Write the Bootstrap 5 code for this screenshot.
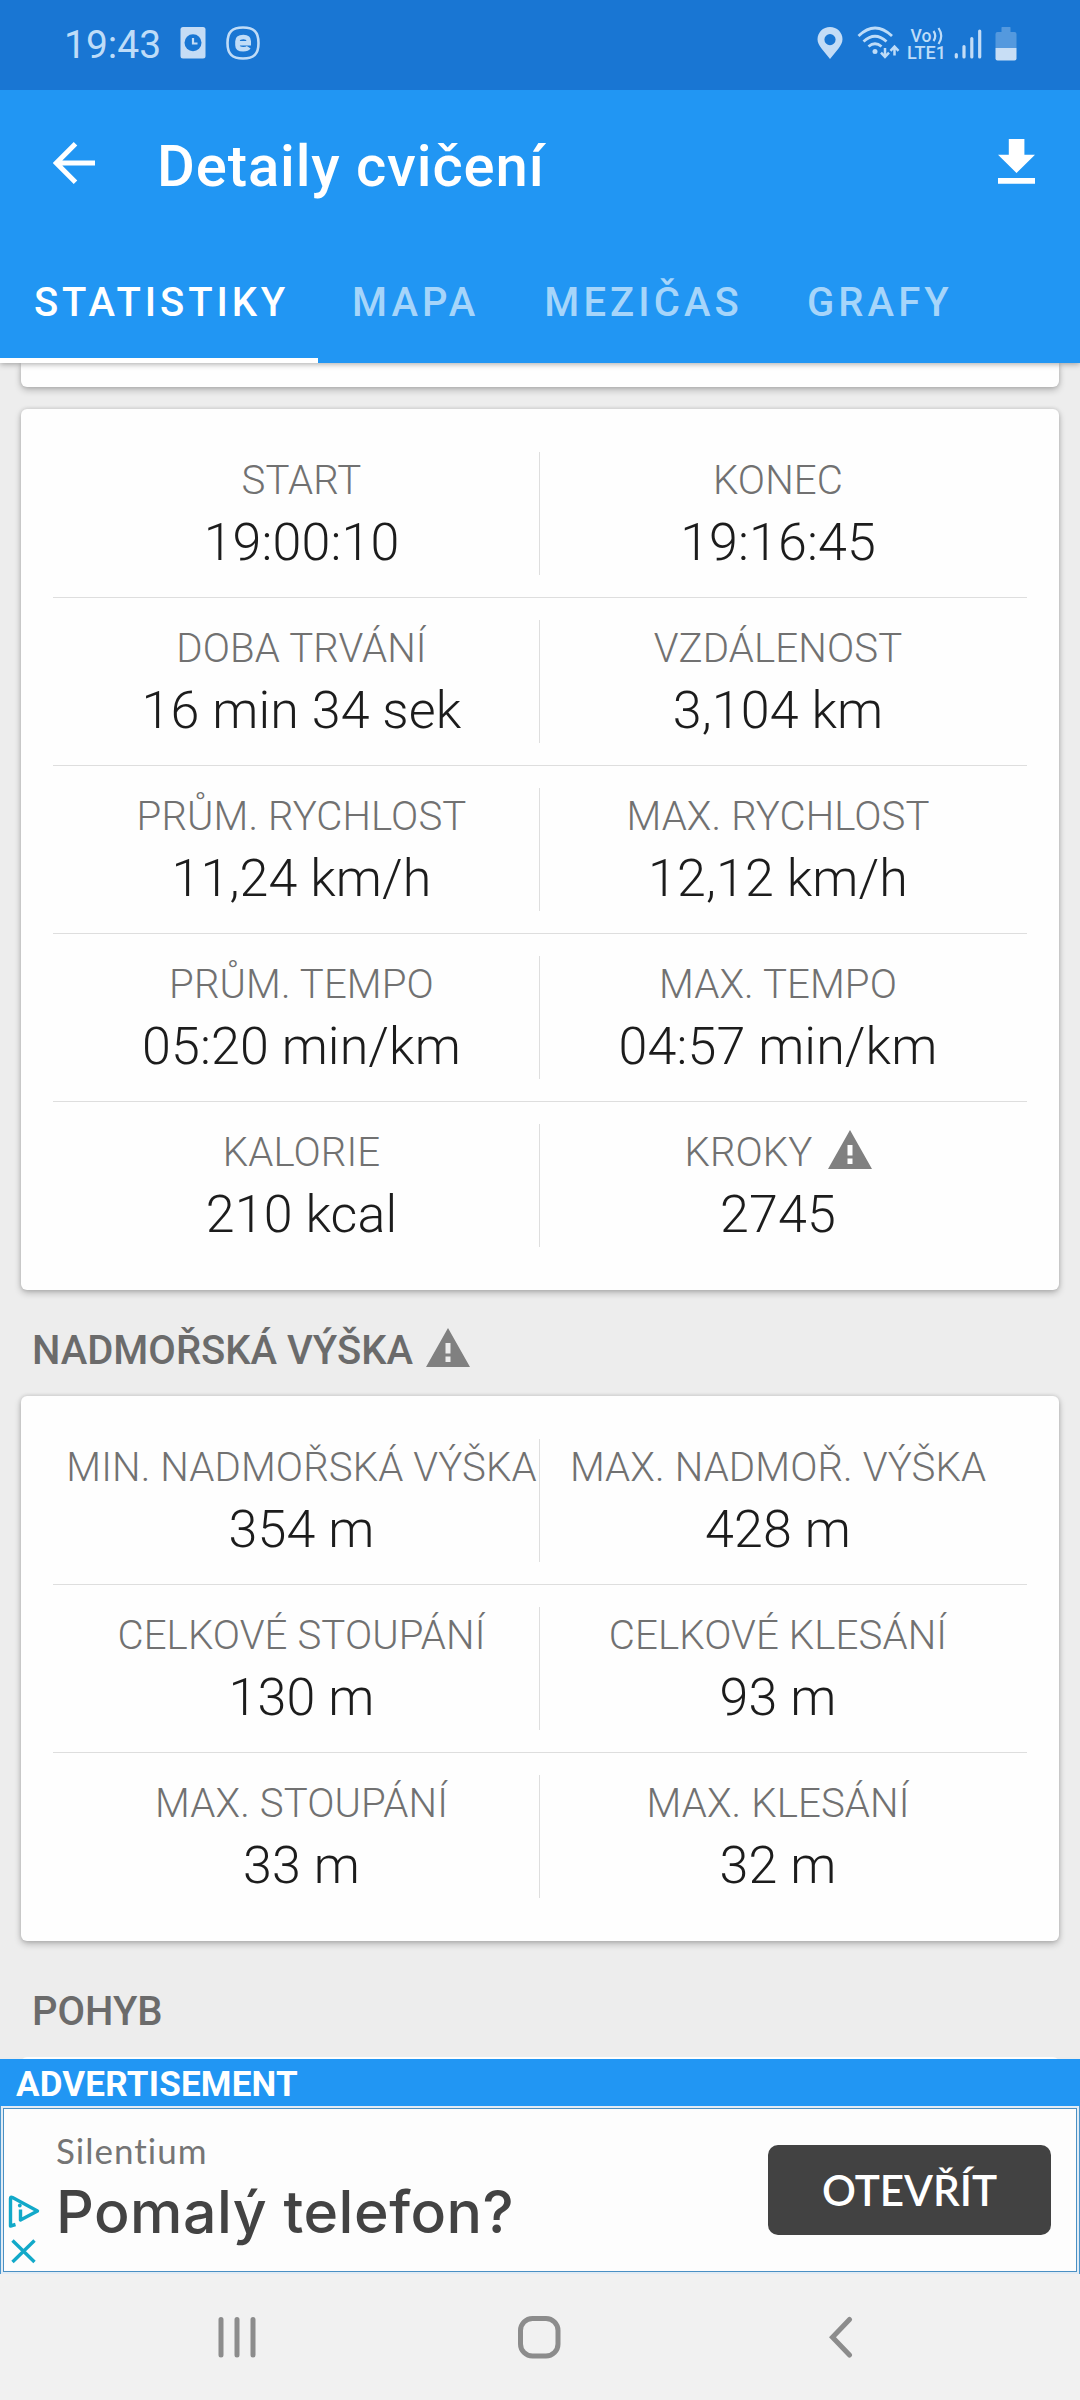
<!DOCTYPE html>
<html lang="cs">
<head>
<meta charset="utf-8">
<title>Detaily cvičení</title>
<meta name="viewport" content="width=device-width, initial-scale=1">
<link href="https://cdn.jsdelivr.net/npm/bootstrap@5.3.0/dist/css/bootstrap.min.css" rel="stylesheet">
<style>
body{font-family:Roboto,"Noto Sans",sans-serif;background:#ededed;height:2400px;overflow:hidden}
svg{display:block;flex:none}
.status{height:90px;background:#1976d3;color:#bedcf8;padding:0 63px 0 64px;z-index:3}
.clock{font-size:39px;line-height:90px;width:101px}
.status .i-note{margin:27px 0 0 15px}
.status .i-e{margin:26px 0 0 20px}
.status .i-top{margin-top:26px}
.status .i-lte{margin:25px 0 0 7px}
.appbar{height:273px;background:#2196f3;color:#fff;box-shadow:0 1px 6px rgba(0,0,0,.35);z-index:2}
.toolbar-row{height:152px;padding:0 45px 0 53px}
.app-title{font-size:58px;font-weight:500;line-height:152px;letter-spacing:.88px;margin:0 0 0 62px}
.app-tabs{height:121px}
.app-tabs .nav-link{font-size:40px;font-weight:500;letter-spacing:4.1px;line-height:121px;height:121px;padding:0 31px 0 34px;color:#a6d5fa;border:0;border-radius:0}
.app-tabs .nav-link.active{color:#fff;padding:0 28px 0 34px;width:318px;letter-spacing:3.900px;box-shadow:inset 0 -5px #fff}
.app-tabs .nav-link:last-child{padding-left:33px}
.sheet{margin:0 21px;border:0;border-radius:6px;box-shadow:0 3px 7px rgba(0,0,0,.24),0 0 4px rgba(0,0,0,.14);background:#fefefe}
.sheet-prev{height:24px;margin-bottom:22px;border-radius:0 0 6px 6px}
.stats{padding:21px 32px}
.stat-row{padding:22px 11px;border-bottom:1px solid #dedede}
.stat-row:last-child{border-bottom:0}
.stat-cell{height:123px;width:475px}
.stat-cell+.stat-cell{border-left:1px solid #dedede;width:477px}
.stat-label{font-size:40.200px;letter-spacing:.1px;font-weight:300;line-height:57px;height:57px;color:#717171;white-space:nowrap}
.stat-label svg{margin:6px 0 0 15px}
.stat-value{font-size:52px;font-weight:300;line-height:68px;letter-spacing:.1px;color:#1c1c1c;white-space:nowrap}
.section-title{height:106px;padding:33px 0 0 32px;margin:0;font-size:40px;font-weight:500;line-height:56px;color:#6b6b6b}
.section-title svg{margin:5px 0 0 13px}
.section-title.wide{height:116px;padding-top:43px}
.ad-label{height:47px;background:#2196f3;color:#fff;font-size:35px;font-weight:700;line-height:51px;letter-spacing:.2px;padding-left:16px;z-index:2}
.ad{height:168px;background:#e2ecf4;border:solid #4a97cf;border-width:0 1px;padding:2px 2px 2px 2px;z-index:2}
.ad-inner{height:164px;background:#fdfdfd;border:1px solid #4a90c4;padding-right:25px}
.ad-marks{width:52px;padding:85px 0 0 4px}
.ad-brand{font:400 35px/44px Lato,sans-serif;letter-spacing:1px;color:#757575;margin-top:19px}
.ad-head{font:500 59px/70px Inter,sans-serif;letter-spacing:.5px;color:#434343;margin-top:5px;white-space:nowrap}
.ad-btn,.ad-btn:hover{width:283px;height:90px;margin-top:36px;padding:0;border:0;border-radius:10px;background:#424242;color:#fff;font:600 42.200px/90px Lato,sans-serif}
.sysnav{height:126px;background:#f1f1f1;z-index:2;padding:42px 227px 0 218px}
</style>
<script src="https://cdn.jsdelivr.net/npm/bootstrap@5.3.0/dist/js/bootstrap.bundle.min.js"></script>
</head>
<body class="d-flex flex-column m-0">

<header class="status position-relative d-flex align-items-start flex-shrink-0">
  <span class="clock">19:43</span>
  <svg class="i-note" width="26" height="32" viewBox="0 0 26 32"><rect x=".5" width="25" height="31.5" rx="2.5" fill="#c5dcf5"/><circle cx="13" cy="15.700" r="8.500" fill="#1976d3"/><path d="M13 11v5.500h4.500" fill="none" stroke="#c5dcf5" stroke-width="2.200"/></svg>
  <svg class="i-e" width="34" height="34" viewBox="0 0 34 34" fill="none" stroke="#c0dcf7"><path d="M17 1.500C28 1.500 32.500 6 32.500 17S28 32.500 17 32.500 1.500 28 1.500 17 6 1.500 17 1.500z" stroke-width="2.600"/><path d="M11.500 17.200h11.200v-2c0-3-2-4.200-5.300-4.200s-5.900 1.200-5.900 4.200v4c0 3 2.300 4 5.700 4 2.500 0 4.500-.5 5.500-2" stroke-width="4.600"/></svg>
  <svg class="i-top ms-auto" width="26" height="33" viewBox="0 0 26 33"><path fill="#c3dcf6" fill-rule="evenodd" d="M13 1C6 1 .5 6.500.5 13.200c0 3.300 1.800 6.200 4 9.200L13 33l8.500-10.600c2.200-3 4-5.900 4-9.200C25.500 6.500 20 1 13 1zm0 7a5.600 5.600 0 1 1 0 11.200A5.600 5.600 0 0 1 13 8z"/></svg>
  <svg class="i-top" style="margin-left:14px" width="43" height="34" viewBox="0 0 43 34" fill="none" stroke="#bedcf8" stroke-width="2.800"><path d="M1.500 10Q18-6 35 10M6.500 15.500q11.500-10.500 23 0M11.500 20.500q6.500-5.500 13 0"/><circle cx="18" cy="25.500" r="2.500" fill="#bedcf8" stroke="none"/><path d="M28 22v9m-4-4.300 4 4.300 4-4.300M37.500 29.500v-9m-4 4.300 4-4.300 4 4.300" stroke-width="2.500"/></svg>
  <svg class="i-lte" width="40" height="42" viewBox="0 -1 40 42" fill="#bedcf8" font-family="Roboto,sans-serif" font-weight="500"><text x="3.500" y="15.500" font-size="17.500">Vo</text><text x="0" y="32.700" font-size="18.500" textLength="39" lengthAdjust="spacingAndGlyphs">LTE1</text><path d="M26.500 5q3.500 5 0 10M31.500 2q5.500 8 0 16" fill="none" stroke="#bedcf8" stroke-width="2.200"/></svg>
  <svg class="i-top" style="margin-left:7px" width="28" height="34" viewBox="0 0 28 34" stroke="#c3dcf6" stroke-width="3.200" stroke-linecap="round"><path d="M2.300 28.500v2.500M10 20.500V31M17.800 12.500V31M25.700 5v26"/></svg>
  <svg class="i-top" style="margin-left:13px" width="22" height="35" viewBox="0 0 22 35"><path d="M6.500 1.500q0-.5.500-.5h8q.5 0 .5.500V6h4q2 0 2 2v14H.5V8q0-2 2-2h4z" fill="#5499de"/><path d="M.5 22h21v10.500q0 2-2 2h-17q-2 0-2-2z" fill="#c8def5"/></svg>
</header>

<div class="appbar position-relative flex-shrink-0">
  <div class="toolbar-row d-flex align-items-start">
    <svg style="margin-top:52px" width="42" height="42" viewBox="0 0 42 42" fill="none" stroke="#fff" stroke-width="5"><path d="M42 21H4M22.500 1.800 3.300 21l19.200 19.200"/></svg>
    <h1 class="app-title">Detaily cvičení</h1>
    <svg class="ms-auto" style="margin-top:49px" width="37" height="45" viewBox="0 0 37 45" fill="#fff"><path d="M10.800 0h15.600v15.800H37L18.500 34 0 15.800h10.800zM0 39h37v5.800H0z"/></svg>
  </div>
  <nav class="nav app-tabs flex-nowrap">
    <a class="nav-link active" href="#">STATISTIKY</a>
    <a class="nav-link" href="#">MAPA</a>
    <a class="nav-link" href="#">MEZIČAS</a>
    <a class="nav-link" href="#">GRAFY</a>
  </nav>
</div>

<main class="flex-grow-1 overflow-hidden" style="min-height:0">
  <div class="sheet sheet-prev"></div>
  <section class="sheet stats text-center">
    <div class="stat-row d-flex">
      <div class="stat-cell"><div class="stat-label">START</div><div class="stat-value">19:00:10</div></div>
      <div class="stat-cell"><div class="stat-label">KONEC</div><div class="stat-value">19:16:45</div></div>
    </div>
    <div class="stat-row d-flex">
      <div class="stat-cell"><div class="stat-label">DOBA TRVÁNÍ</div><div class="stat-value">16 min 34 sek</div></div>
      <div class="stat-cell"><div class="stat-label">VZDÁLENOST</div><div class="stat-value">3,104 km</div></div>
    </div>
    <div class="stat-row d-flex">
      <div class="stat-cell"><div class="stat-label">PRŮM. RYCHLOST</div><div class="stat-value">11,24 km/h</div></div>
      <div class="stat-cell"><div class="stat-label">MAX. RYCHLOST</div><div class="stat-value">12,12 km/h</div></div>
    </div>
    <div class="stat-row d-flex">
      <div class="stat-cell"><div class="stat-label">PRŮM. TEMPO</div><div class="stat-value">05:20 min/km</div></div>
      <div class="stat-cell"><div class="stat-label">MAX. TEMPO</div><div class="stat-value">04:57 min/km</div></div>
    </div>
    <div class="stat-row d-flex">
      <div class="stat-cell"><div class="stat-label">KALORIE</div><div class="stat-value">210 kcal</div></div>
      <div class="stat-cell"><div class="stat-label d-flex justify-content-center">KROKY<svg width="44" height="39" viewBox="0 0 44 39"><path fill="#808080" fill-rule="evenodd" d="M22 0l22 39H0zM19.500 15v10.500h5V15zM19.500 28.500V34h5v-5.500z"/></svg></div><div class="stat-value">2745</div></div>
    </div>
  </section>

  <h2 class="section-title d-flex align-items-start">NADMOŘSKÁ VÝŠKA<svg width="44" height="39" viewBox="0 0 44 39"><path fill="#808080" fill-rule="evenodd" d="M22 0l22 39H0zM19.500 15v10.500h5V15zM19.500 28.500V34h5v-5.500z"/></svg></h2>
  <section class="sheet stats text-center">
    <div class="stat-row d-flex">
      <div class="stat-cell"><div class="stat-label">MIN. NADMOŘSKÁ VÝŠKA</div><div class="stat-value">354 m</div></div>
      <div class="stat-cell"><div class="stat-label">MAX. NADMOŘ. VÝŠKA</div><div class="stat-value">428 m</div></div>
    </div>
    <div class="stat-row d-flex">
      <div class="stat-cell"><div class="stat-label">CELKOVÉ STOUPÁNÍ</div><div class="stat-value">130 m</div></div>
      <div class="stat-cell"><div class="stat-label">CELKOVÉ KLESÁNÍ</div><div class="stat-value">93 m</div></div>
    </div>
    <div class="stat-row d-flex">
      <div class="stat-cell"><div class="stat-label">MAX. STOUPÁNÍ</div><div class="stat-value">33 m</div></div>
      <div class="stat-cell"><div class="stat-label">MAX. KLESÁNÍ</div><div class="stat-value">32 m</div></div>
    </div>
  </section>
  <h2 class="section-title wide">POHYB</h2>
  <section class="sheet stats shadow-none"></section>
</main>

<div class="ad-label position-relative flex-shrink-0">ADVERTISEMENT</div>
<div class="ad position-relative flex-shrink-0">
  <div class="ad-inner d-flex align-items-start">
    <div class="ad-marks">
      <svg width="32" height="70" viewBox="0 0 32 70" fill="none" stroke="#12a9c9" stroke-width="3.400" stroke-linejoin="round"><path d="M7.500 30.500 2.500 32V4.500q0-2 2-1L29.500 17 12.500 26V15.500"/><circle cx="11.800" cy="11.500" r="1.900" fill="#12a9c9" stroke="none"/><path d="M4.500 46.500 26.500 68M26.500 46.500 4.500 68"/></svg>
    </div>
    <div>
      <div class="ad-brand">Silentium</div>
      <div class="ad-head">Pomalý telefon?</div>
    </div>
    <button class="btn ad-btn ms-auto" type="button">OTEVŘÍT</button>
  </div>
</div>

<footer class="sysnav d-flex justify-content-between align-items-start flex-shrink-0">
  <svg width="39" height="43" viewBox="0 0 39 43" stroke="#8c8c8c" stroke-width="5" stroke-linecap="round"><path d="M3 3.500v35.500M19 3.500v35.500M35 3.500v35.500"/></svg>
  <svg style="margin-right:7px" width="43" height="43" viewBox="0 0 43 43" fill="none" stroke="#8c8c8c" stroke-width="5"><rect x="2.500" y="2.500" width="37.500" height="37.500" rx="12"/></svg>
  <svg width="24" height="43" viewBox="0 0 24 43" fill="none" stroke="#8c8c8c" stroke-width="5" stroke-linecap="round"><path d="M20.500 3.500 3.500 21.200l17 17.800"/></svg>
</footer>
</body>
</html>
